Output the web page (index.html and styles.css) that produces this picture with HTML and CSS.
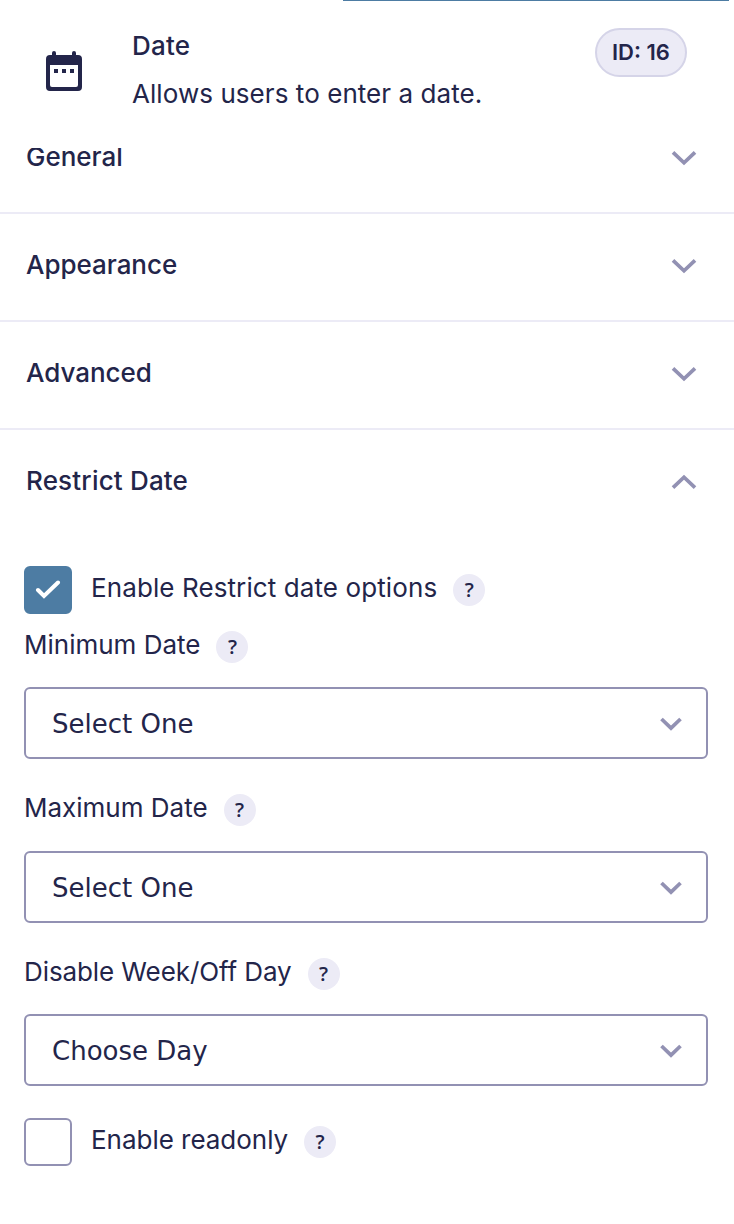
FILE: index.html
```html
<!DOCTYPE html>
<html lang="en">
<head>
<meta charset="utf-8">
<title>Date field settings</title>
<link rel="stylesheet" href="styles.css">
</head>
<body>
<div class="panel">
  <div class="tab-line"></div>
  <header class="field-header">
    <svg class="field-icon" width="36" height="40" viewBox="0 0 36 40">
      <path fill="#23254a" fill-rule="evenodd" d="M6 4V2a2 2 0 0 1 4 0v2h16V2a2 2 0 0 1 4 0v2h2a4 4 0 0 1 4 4v28a4 4 0 0 1-4 4H4a4 4 0 0 1-4-4V8a4 4 0 0 1 4-4zM4 14v20a2 2 0 0 0 2 2h24a2 2 0 0 0 2-2V14z"/>
      <path fill="#23254a" d="M8 18h4v4H8zM16 18h4v4h-4zM24 18h4v4h-4z"/>
    </svg>
    <div class="field-info">
      <div class="field-name">Date</div>
      <div class="field-desc">Allows users to enter a date.</div>
    </div>
    <div class="field-id">ID: 16</div>
  </header>
  <main class="sections">
    <div class="section-title first"><span>General</span><svg class="chevron" width="26" height="16" viewBox="0 0 26 16"><path d="M2 2.3 13 12.8 24 2.3"/></svg></div>
    <div class="section-title"><span>Appearance</span><svg class="chevron" width="26" height="16" viewBox="0 0 26 16"><path d="M2 2.3 13 12.8 24 2.3"/></svg></div>
    <div class="section-title"><span>Advanced</span><svg class="chevron" width="26" height="16" viewBox="0 0 26 16"><path d="M2 2.3 13 12.8 24 2.3"/></svg></div>
    <div class="section-title open"><span>Restrict Date</span><svg class="chevron" width="26" height="16" viewBox="0 0 26 16"><path d="M2 13.7 13 3.2 24 13.7"/></svg></div>
    <div class="options">
      <div class="check-row restrict">
        <span class="checkbox checked"><svg width="26" height="20" viewBox="0 0 26 20"><path d="M3 10 9 16 23 2.5"/></svg></span>
        <span class="label">Enable Restrict date options</span><span class="help">?</span>
      </div>
      <div class="label-row min"><span class="label">Minimum Date</span><span class="help">?</span></div>
      <div class="select"><span>Select One</span><svg class="chevron" width="22" height="14" viewBox="0 0 22 14"><path d="M1.5 2 11 11.2 20.5 2"/></svg></div>
      <div class="label-row max"><span class="label">Maximum Date</span><span class="help">?</span></div>
      <div class="select"><span>Select One</span><svg class="chevron" width="22" height="14" viewBox="0 0 22 14"><path d="M1.5 2 11 11.2 20.5 2"/></svg></div>
      <div class="label-row off"><span class="label">Disable Week/Off Day</span><span class="help">?</span></div>
      <div class="select"><span>Choose Day</span><svg class="chevron" width="22" height="14" viewBox="0 0 22 14"><path d="M1.5 2 11 11.2 20.5 2"/></svg></div>
      <div class="check-row readonly">
        <span class="checkbox"></span>
        <span class="label">Enable readonly</span><span class="help">?</span>
      </div>
    </div>
  </main>
</div>
</body>
</html>
```
FILE: styles.css
```css
* { box-sizing: border-box; }
body {
  margin: 0;
  background: #fff;
  color: #23254a;
  font: 400 26px/32px Inter, "Liberation Sans", sans-serif;
}
.panel { width: 734px; height: 1224px; overflow: hidden; }
.tab-line { height: 1px; margin: 0 5px 0 343px; background: #4d7ca3; }
.field-header {
  display: flex;
  align-items: flex-start;
  height: 147px;
  padding: 27px 47px 0 46px;
}
.field-icon { flex: none; margin-top: 23px; }
.field-info { flex: 1; margin-left: 50px; padding-top: 2px; }
.field-name { font-weight: 500; letter-spacing: 0.2px; }
.field-desc { margin-top: 16px; letter-spacing: 0.06px; }
.field-id {
  width: 92px;
  height: 49px;
  border: 2px solid #d5d4e8;
  border-radius: 25px;
  background: #ecebf6;
  font-size: 22px;
  font-weight: 600;
  line-height: 45px;
  text-align: center;
}
.sections { overflow: hidden; }
.section-title {
  display: flex;
  align-items: center;
  justify-content: space-between;
  height: 108px;
  padding: 0 37px 4px 26px;
  border-bottom: 2px solid #ecebf6;
  font-weight: 500;
  letter-spacing: -0.03px;
}
.section-title.first { margin-top: -42px; }
.section-title.open { border-bottom-color: transparent; letter-spacing: 0.18px; }
.chevron { flex: none; margin-top: 2px; fill: none; stroke: #9291b3; stroke-width: 3.7; }
.options { padding: 28px 26px 0 24px; }
.check-row, .label-row { display: flex; align-items: center; }
.check-row { height: 48px; }
.checkbox {
  display: flex;
  align-items: center;
  justify-content: center;
  width: 48px;
  height: 48px;
  margin-right: 19px;
  border: 2px solid #9291b3;
  border-radius: 6px;
}
.checked { border-color: #4d7ca3; background: #4d7ca3; }
.checked svg { fill: none; stroke: #fff; stroke-width: 4; stroke-linecap: round; }
.label { padding-bottom: 4px; }
.restrict .label { letter-spacing: 0.1px; }
.off .label { letter-spacing: -0.09px; }
.readonly .label { letter-spacing: -0.03px; }
.help {
  width: 32px;
  height: 32px;
  margin-left: 16px;
  border-radius: 50%;
  background: #ecebf6;
  font: 600 20px/32px "Open Sans", "Noto Sans", sans-serif;
  text-align: center;
}
.label-row { height: 32px; }
.min { margin: 17px 0 24px; }
.max { margin: 35px 0 25px; }
.off { margin: 35px 0 24px; }
.select {
  display: flex;
  align-items: center;
  justify-content: space-between;
  height: 72px;
  padding: 2px 24px 0 26px;
  border: 2px solid #9291b3;
  border-radius: 6px;
  font-family: "DejaVu Sans", sans-serif;
}
.select .chevron { margin-top: 0; }
.readonly { margin-top: 32px; }
```
